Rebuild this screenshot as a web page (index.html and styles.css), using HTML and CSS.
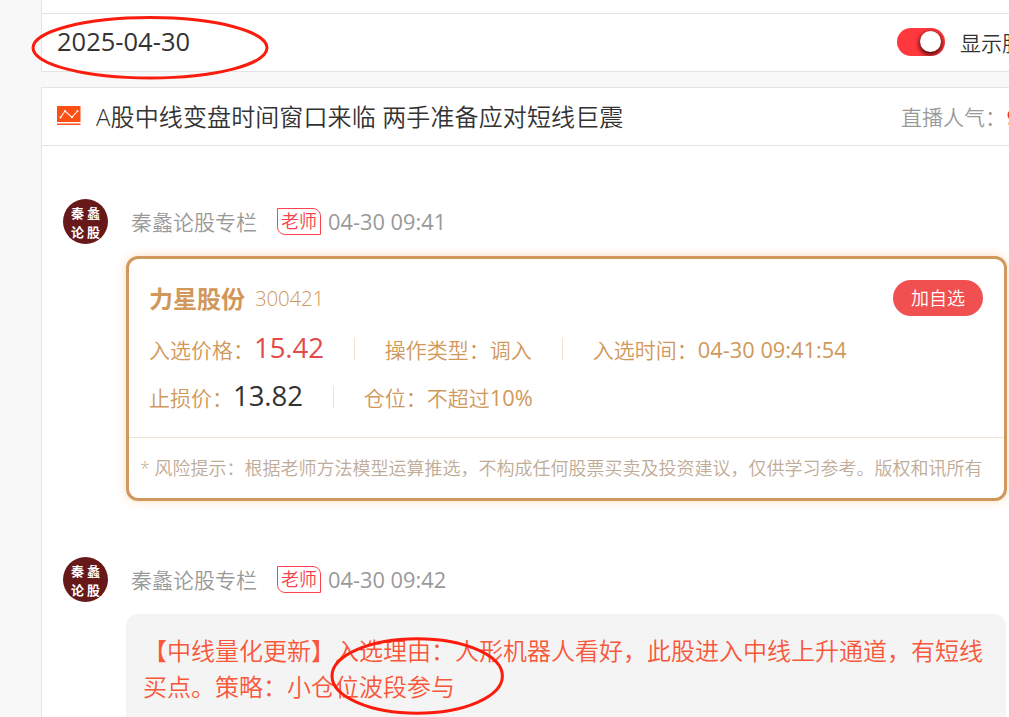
FILE: index.html
```html
<!DOCTYPE html>
<html lang="zh-CN">
<head>
  <meta charset="UTF-8">
  <meta name="viewport" content="width=device-width, initial-scale=1.0">
  <title>秦蠡论股专栏</title>
  <link rel="stylesheet" href="styles.css">
</head>
<body>
  <div class="page">
    <!-- 日期栏 -->
    <div class="top-edge"></div>
    <div class="date-bar">
      <span class="date">2025-04-30</span>
      <div class="switch-box">
        <span class="switch"><i class="knob"></i></span>
        <span class="switch-text">显示股票</span>
      </div>
    </div>

    <!-- 直播内容 -->
    <div class="live">
      <div class="live-head">
        <svg class="live-icon" width="24" height="20" viewBox="0 0 24 20">
          <rect x="0" y="0" width="23.5" height="16" fill="#fa5014"/>
          <rect x="0" y="17.5" width="23.5" height="1.5" fill="#fa5014"/>
          <path d="M3.5 11.5L8 5l7 6.3L20.5 5" fill="none" stroke="#fff" stroke-width="1.1"/>
          <g fill="#fff">
            <circle cx="3.5" cy="11.5" r="1"/>
            <circle cx="8" cy="5" r="1"/>
            <circle cx="15" cy="11.3" r="1"/>
            <circle cx="20.5" cy="5" r="1"/>
          </g>
        </svg>
        <h1 class="live-title">A股中线变盘时间窗口来临 两手准备应对短线巨震</h1>
        <span class="hot">直播人气：<b>9</b></span>
      </div>

      <div class="post">
        <div class="avatar"><span>秦 蠡</span><span>论 股</span></div>
        <div class="post-main">
          <div class="post-info">
            <span class="name">秦蠡论股专栏</span>
            <span class="tag">老师</span>
            <span class="time">04-30 09:41</span>
          </div>
          <div class="card">
            <div class="card-top">
              <strong class="stock">力星股份</strong>
              <span class="code">300421</span>
              <a class="add-btn">加自选</a>
            </div>
            <div class="card-row">
              <span class="cell">入选价格：<em class="price red">15.42</em></span>
              <span class="cell">操作类型：调入</span>
              <span class="cell">入选时间：<span class="num">04-30 09:41:54</span></span>
            </div>
            <div class="card-row">
              <span class="cell">止损价：<em class="price">13.82</em></span>
              <span class="cell">仓位：不超过<span class="num">10%</span></span>
            </div>
            <div class="risk">* 风险提示：根据老师方法模型运算推选，不构成任何股票买卖及投资建议，仅供学习参考。版权和讯所有</div>
          </div>
        </div>
      </div>

      <div class="post">
        <div class="avatar"><span>秦 蠡</span><span>论 股</span></div>
        <div class="post-main">
          <div class="post-info">
            <span class="name">秦蠡论股专栏</span>
            <span class="tag">老师</span>
            <span class="time">04-30 09:42</span>
          </div>
          <div class="bubble">【中线量化更新】入选理由：人形机器人看好，此股进入中线上升通道，有短线买点。策略：小仓位波段参与</div>
        </div>
      </div>
    </div>
  </div>

  <!-- 红圈标注 -->
  <svg class="marks" width="1009" height="717" viewBox="0 0 1009 717">
    <g fill="none" stroke="#fb1c0e" stroke-width="3">
      <ellipse cx="150" cy="47.8" rx="117" ry="30.2"/>
      <ellipse cx="417.2" cy="676" rx="85.2" ry="37.2"/>
    </g>
  </svg>
</body>
</html>
```
FILE: styles.css
```css
* {
  margin: 0;
  padding: 0;
  box-sizing: border-box;
}

html {
  overflow: hidden;
}

body {
  height: 717px;
  overflow: hidden;
  background: #f8f8f8;
  color: #333;
  font-family: "Open Sans", "Noto Sans CJK SC", sans-serif;
  font-size: 21px;
  font-weight: 350;
}

.page {
  width: 1100px;
  margin-left: 41px;
}

/* 日期栏 */
.top-edge {
  height: 13px;
  background: #fff;
  border-left: 1px solid #e3e3e3;
}

.date-bar {
  display: flex;
  align-items: center;
  height: 59px;
  padding-left: 15px;
  background: #fff;
  border: 1px solid #e3e3e3;
}

.date {
  width: 840px;
  padding-bottom: 3px;
  font-size: 25.5px;
  font-weight: 400;
  line-height: 54px;
}

.switch-box {
  display: flex;
  align-items: center;
  gap: 15px;
  padding-bottom: 1px;
  line-height: 56px;
}

.switch {
  display: flex;
  justify-content: flex-end;
  align-items: center;
  width: 48px;
  height: 28px;
  padding: 0 4px 2px 0;
  background: #ff383e;
  border-radius: 14px;
  overflow: hidden;
}

.switch-text {
  padding-top: 1px;
}

.knob {
  width: 21px;
  height: 21px;
  border-radius: 50%;
  background: #fff;
  box-shadow: 0 2px 4px 1px rgba(50, 0, 0, 0.8);
}

/* 直播标题 */
.live {
  height: 700px;
  margin-top: 15px;
  background: #fff;
  border: 1px solid #e3e3e3;
}

.live-head {
  display: flex;
  align-items: center;
  height: 58px;
  padding-left: 15px;
  border-bottom: 1px solid #e3e3e3;
}

.live-icon {
  margin-top: -1px;
}

.live-title {
  width: 805px;
  margin-left: 15px;
  padding-top: 1px;
  font-size: 24px;
  font-weight: 350;
  line-height: 56px;
  letter-spacing: 0.12px;
}

.hot {
  padding-top: 1px;
  color: #999;
  line-height: 56px;
  white-space: nowrap;
}

.hot b {
  margin-left: 1px;
  color: #f52f20;
}

/* 直播条目 */
.post {
  display: flex;
  width: 965px;
  margin-top: 53px;
  padding-left: 21px;
}

.post + .post {
  margin-top: 56px;
}

.avatar {
  width: 45px;
  height: 45px;
  padding-top: 4px;
  border-radius: 50%;
  background: #671819;
  color: #fff;
  text-align: center;
  font-family: "Noto Sans CJK SC", serif;
  font-size: 13px;
  font-weight: 700;
  line-height: 19px;
}

.avatar span {
  display: block;
}

.post-main {
  flex: 1;
  margin-left: 18px;
}

.post-info {
  display: flex;
  align-items: center;
  height: 45px;
  padding-left: 5px;
  color: #999;
}

.name {
  margin-top: -2px;
}

.tag {
  width: 44px;
  height: 27px;
  margin: 0 7px 0 20px;
  border: 1px solid #ff4450;
  border-radius: 0 8px 0 8px;
  color: #f8404c;
  font-size: 18px;
  line-height: 25px;
  text-align: center;
}

.time {
  font-size: 21.8px;
  font-weight: 400;
}

/* 股票卡片 */
.card {
  height: 245px;
  margin-top: 12px;
  border: 3px solid #d0985a;
  border-radius: 12px;
  color: #d0985a;
  box-shadow: 0 0 10px rgba(240, 170, 80, 0.4);
}

.card-top {
  display: flex;
  align-items: center;
  height: 36px;
  margin: 21px 21px 0 20px;
}

.stock {
  margin-top: -2px;
  font-size: 24px;
}

.code {
  margin-left: 10px;
  font-size: 20.5px;
  font-weight: 300;
  letter-spacing: -0.2px;
}

.add-btn {
  width: 90px;
  height: 36px;
  margin-left: auto;
  border-radius: 18px;
  background: #f05050;
  color: #fff;
  font-size: 18px;
  line-height: 36px;
  text-align: center;
}

.card-row {
  display: flex;
  height: 48px;
  padding-left: 20px;
}

.card-top + .card-row {
  margin-top: 9px;
}

.cell {
  display: flex;
  align-items: center;
  white-space: nowrap;
}

.cell + .cell::before {
  content: "";
  width: 1px;
  height: 22px;
  margin: 0 30px;
  background: #f2e2d2;
}

.price {
  margin-top: -5px;
  color: #333;
  font-size: 27.6px;
  font-style: normal;
  font-weight: 400;
  letter-spacing: -0.1px;
}

.red {
  color: #e34a4a;
}

.num {
  padding-top: 1px;
  font-size: 21.8px;
  font-weight: 400;
  letter-spacing: 0;
}

.risk {
  height: 61px;
  margin-top: 16px;
  padding-left: 11px;
  border-top: 1px solid #f2e2d2;
  color: #c0ab98;
  font-size: 18px;
  line-height: 61px;
  white-space: nowrap;
}

/* 消息气泡 */
.bubble {
  height: 130px;
  margin-top: 12px;
  margin-right: 1px;
  padding: 19px 17px;
  border-radius: 12px;
  background: #f4f4f4;
  color: #f9573a;
  font-size: 24px;
  line-height: 36px;
}

/* 标注层 */
.marks {
  position: absolute;
  top: 0;
  left: 0;
}
```
